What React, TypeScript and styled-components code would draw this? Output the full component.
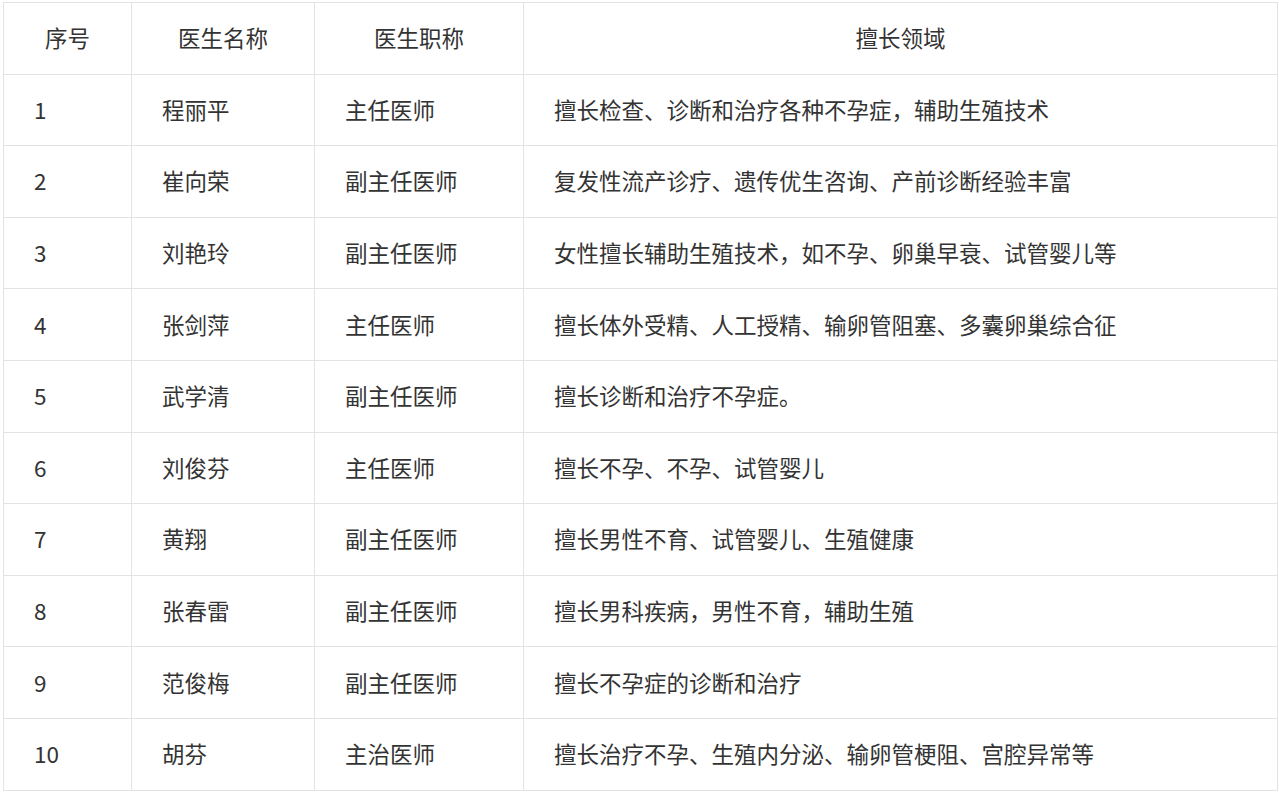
import React from "react";
import styled, { createGlobalStyle } from "styled-components";

const Global = createGlobalStyle`
  html, body { margin: 0; padding: 0; background: #fff; }
  body { font-family: "Noto Sans CJK SC", "Noto Sans", sans-serif; color: #333; }
`;

const Page = styled.div`
  padding: 2px 2px 0 3px;
`;

const Table = styled.table`
  width: 1274px;
  border-collapse: collapse;
  table-layout: fixed;
  font-size: 22.5px;
  color: #333;
`;

const Col = styled.col<{ $w: number }>`
  width: ${(p) => p.$w}px;
`;

const Row = styled.tr`
  height: 71.6px;
`;

const HeadCell = styled.th`
  border: 1px solid #e3e3e3;
  font-weight: 400;
  text-align: center;
  padding: 0 0 2px;
`;

const Cell = styled.td`
  border: 1px solid #e3e3e3;
  padding: 0 0 2px 30px;
  text-align: left;
  white-space: nowrap;
`;

const rows = [
  ["1", "程丽平", "主任医师", "擅长检查、诊断和治疗各种不孕症，辅助生殖技术"],
  ["2", "崔向荣", "副主任医师", "复发性流产诊疗、遗传优生咨询、产前诊断经验丰富"],
  ["3", "刘艳玲", "副主任医师", "女性擅长辅助生殖技术，如不孕、卵巢早衰、试管婴儿等"],
  ["4", "张剑萍", "主任医师", "擅长体外受精、人工授精、输卵管阻塞、多囊卵巢综合征"],
  ["5", "武学清", "副主任医师", "擅长诊断和治疗不孕症。"],
  ["6", "刘俊芬", "主任医师", "擅长不孕、不孕、试管婴儿"],
  ["7", "黄翔", "副主任医师", "擅长男性不育、试管婴儿、生殖健康"],
  ["8", "张春雷", "副主任医师", "擅长男科疾病，男性不育，辅助生殖"],
  ["9", "范俊梅", "副主任医师", "擅长不孕症的诊断和治疗"],
  ["10", "胡芬", "主治医师", "擅长治疗不孕、生殖内分泌、输卵管梗阻、宫腔异常等"],
];

export default function App() {
  return (
    <Page>
      <Global />
      <Table>
        <colgroup>
          <Col $w={128} />
          <Col $w={183} />
          <Col $w={209} />
          <Col $w={754} />
        </colgroup>
        <thead>
          <Row>
            <HeadCell>序号</HeadCell>
            <HeadCell>医生名称</HeadCell>
            <HeadCell>医生职称</HeadCell>
            <HeadCell>擅长领域</HeadCell>
          </Row>
        </thead>
        <tbody>
          {rows.map((r) => (
            <Row key={r[0]}>
              {r.map((c, i) => (
                <Cell key={i}>{c}</Cell>
              ))}
            </Row>
          ))}
        </tbody>
      </Table>
    </Page>
  );
}
